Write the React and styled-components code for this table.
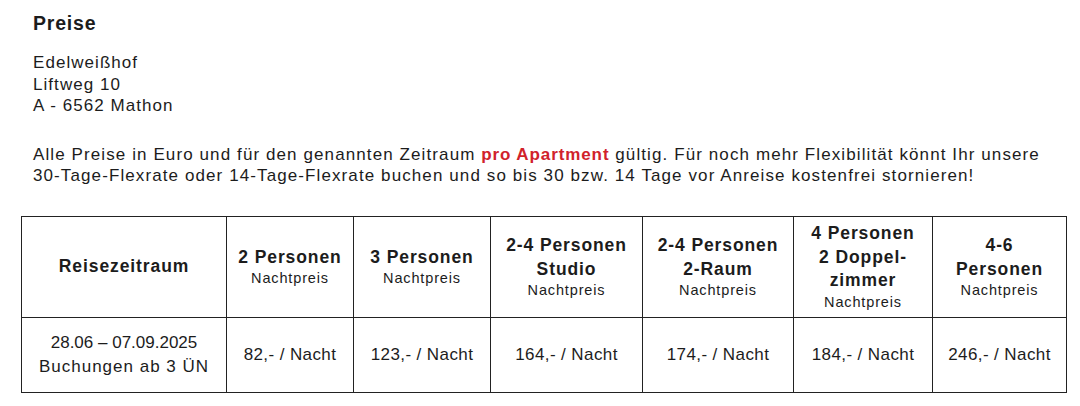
import React from "react";
import styled, { createGlobalStyle } from "styled-components";

const Global = createGlobalStyle`
  html, body { margin: 0; padding: 0; background: #fff; }
  body { font-family: "Liberation Sans", Arial, sans-serif; color: #1c1c1c; }
`;

const Page = styled.div`
  width: 1080px;
  height: 406px;
  padding: 11px 0 0 21px;
  box-sizing: border-box;
  overflow: hidden;
`;

const Text = styled.div`
  padding-left: 12px;
`;

const Title = styled.h2`
  margin: 0;
  font-size: 19.5px;
  font-weight: 700;
  line-height: 24px;
  letter-spacing: 0.8px;
`;

const Address = styled.p`
  margin: 17px 0 0;
  font-size: 17px;
  line-height: 21.5px;
  letter-spacing: 1.05px;
`;

const Intro = styled.p`
  margin: 27px 0 0;
  font-size: 17px;
  line-height: 21px;
  letter-spacing: 1.1px;
  white-space: nowrap;
`;

const Red = styled.strong`
  color: #d1222b;
  font-weight: 700;
  letter-spacing: 0.9px;
`;

const Table = styled.table`
  margin-top: 30px;
  border-collapse: collapse;
  table-layout: fixed;
  width: 1045px;
`;

const Col = styled.col`
  width: ${(p) => p.$w}px;
`;

const Head = styled.th`
  border: 1.5px solid #222;
  height: 100px;
  padding: 0 2px;
  text-align: center;
  vertical-align: middle;
  font-weight: 700;
  font-size: 17.5px;
  line-height: 23.5px;
  letter-spacing: 0.9px;
  white-space: nowrap;
`;

const Sub = styled.span`
  display: block;
  font-weight: 400;
  font-size: 14.5px;
  line-height: 18px;
  letter-spacing: 0.85px;
`;

const Cell = styled.td`
  border: 1.5px solid #222;
  height: 74px;
  padding: 0 2px;
  text-align: center;
  vertical-align: middle;
  font-size: 17px;
  line-height: 23.3px;
  letter-spacing: ${(p) => (p.$wide ? "0.4px" : "0")};
  white-space: nowrap;
`;

const Line = styled.span`
  display: block;
  letter-spacing: ${(p) => (p.$wide ? "1px" : "0")};
`;

const widths = [205, 127, 137, 152, 151, 139, 134];

const headers = [
  { lines: ["Reisezeitraum"], sub: false },
  { lines: ["2 Personen"], sub: true },
  { lines: ["3 Personen"], sub: true },
  { lines: ["2-4 Personen", "Studio"], sub: true },
  { lines: ["2-4 Personen", "2-Raum"], sub: true },
  { lines: ["4 Personen", "2 Doppel-", "zimmer"], sub: true },
  { lines: ["4-6", "Personen"], sub: true },
];

const prices = ["82,- / Nacht", "123,- / Nacht", "164,- / Nacht", "174,- / Nacht", "184,- / Nacht", "246,- / Nacht"];

export default function App() {
  return (
    <>
      <Global />
      <Page>
        <Text>
          <Title>Preise</Title>
          <Address>
            Edelweißhof
            <br />
            Liftweg 10
            <br />A - 6562 Mathon
          </Address>
          <Intro>
            Alle Preise in Euro und für den genannten Zeitraum <Red>pro Apartment</Red> gültig. Für noch mehr
            Flexibilität könnt Ihr unsere
            <br />
            30-Tage-Flexrate oder 14-Tage-Flexrate buchen und so bis 30 bzw. 14 Tage vor Anreise kostenfrei
            stornieren!
          </Intro>
        </Text>
        <Table>
          <colgroup>
            {widths.map((w, i) => (
              <Col key={i} $w={w} />
            ))}
          </colgroup>
          <thead>
            <tr>
              {headers.map((h, i) => (
                <Head key={i}>
                  {h.lines.map((l, j) => (
                    <React.Fragment key={j}>
                      {j > 0 && <br />}
                      {l}
                    </React.Fragment>
                  ))}
                  {h.sub && <Sub>Nachtpreis</Sub>}
                </Head>
              ))}
            </tr>
          </thead>
          <tbody>
            <tr>
              <Cell>
                <Line>28.06 – 07.09.2025</Line>
                <Line $wide>Buchungen ab 3 ÜN</Line>
              </Cell>
              {prices.map((p, i) => (
                <Cell key={i} $wide>
                  {p}
                </Cell>
              ))}
            </tr>
          </tbody>
        </Table>
      </Page>
    </>
  );
}
